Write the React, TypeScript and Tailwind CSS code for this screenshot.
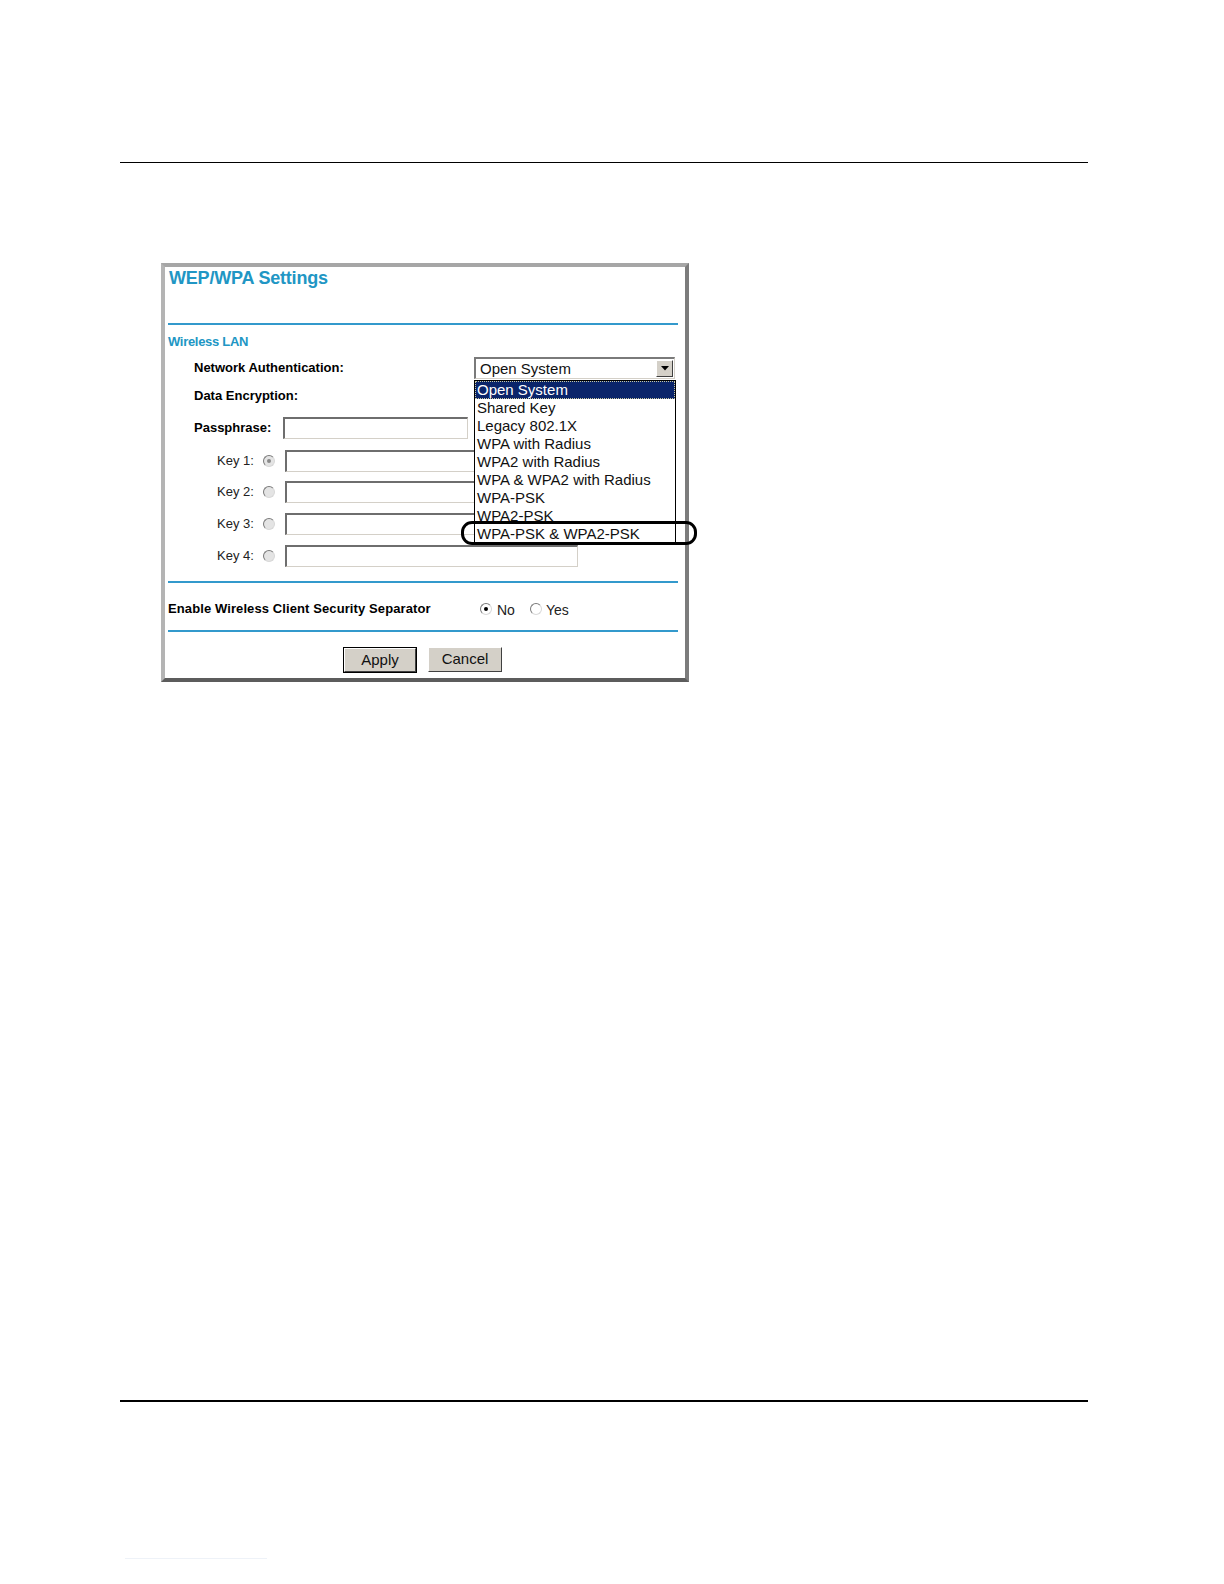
import React from "react";

const options = [
  "Open System",
  "Shared Key",
  "Legacy 802.1X",
  "WPA with Radius",
  "WPA2 with Radius",
  "WPA & WPA2 with Radius",
  "WPA-PSK",
  "WPA2-PSK",
  "WPA-PSK & WPA2-PSK",
];

function Radio({ checked, disabled }: { checked?: boolean; disabled?: boolean }) {
  return (
    <span
      className={`flex items-center justify-center w-[12px] h-[12px] rounded-full border border-t-[#7a7a7a] border-l-[#7a7a7a] border-r-[#d8d8d8] border-b-[#d8d8d8] ${
        disabled ? "bg-[#e4e4e4]" : "bg-white"
      }`}
    >
      {checked && (
        <span
          className={`w-[4px] h-[4px] rounded-full ${
            disabled ? "bg-[#8a8a8a]" : "bg-black"
          }`}
        />
      )}
    </span>
  );
}

function TextBox({ width }: { width: string }) {
  return (
    <div
      className={`${width} h-[22px] bg-white border-t-2 border-l-2 border-r border-b border-t-[#6e6e6e] border-l-[#6e6e6e] border-r-[#d4d0c8] border-b-[#d4d0c8]`}
    />
  );
}

function KeyRow({ n, mt, checked }: { n: number; mt: string; checked?: boolean }) {
  return (
    <div className={`flex items-center h-[22px] ${mt}`}>
      <span className="ml-[52px] w-[46px] text-[13px] text-[#222]">Key {n}:</span>
      <Radio disabled checked={checked} />
      <span className="ml-[10px]">
        <TextBox width="w-[293px]" />
      </span>
    </div>
  );
}

function BlueRule({ mt }: { mt: string }) {
  return <div className={`${mt} ml-[3px] w-[510px] h-[2px] bg-[#3399cc]`} />;
}

export default function App() {
  return (
    <div className="w-[1224px] h-[1584px] bg-white font-['Liberation_Sans',Arial,sans-serif] text-black">
      <div className="pl-[120px] pr-[136px] pt-[162px] flex flex-col">
        <div className="h-px bg-black" />

        {/* settings panel */}
        <div className="relative mt-[100px] ml-[41px] w-[528px] h-[419px] border-4 border-t-[#a6a6a6] border-l-[#b4b4b4] border-r-[#7c7c7c] border-b-[#5c5c5c] bg-white flex flex-col">
          <div className="pl-[4px] h-[22px] leading-[22px] text-[18px] font-bold text-[#2196c4] tracking-[-0.2px]">
            WEP/WPA Settings
          </div>

          <BlueRule mt="mt-[34px]" />

          <div className="mt-[8px] ml-[3px] h-[18px] leading-[18px] text-[13px] font-bold text-[#2196c4] tracking-[-0.3px]">
            Wireless LAN
          </div>

          {/* network authentication */}
          <div className="relative mt-[6px] flex items-center h-[22px]">
            <span className="ml-[29px] w-[280px] text-[13px] font-bold">Network Authentication:</span>
            <div className="flex items-center w-[201px] h-[22px] bg-white border-t-2 border-l-2 border-r border-b border-t-[#7a7a7a] border-l-[#7a7a7a] border-r-[#d4d0c8] border-b-[#d4d0c8]">
              <span className="ml-[4px] flex-1 text-[15px] leading-[18px] text-[#111]">Open System</span>
              <span className="mr-[1px] flex items-center justify-center w-[17px] h-[17px] bg-[#d4d0c8] border border-t-white border-l-white border-r-[#404040] border-b-[#404040]">
                <svg width="8" height="5" viewBox="0 0 8 5">
                  <path d="M0 0h8L4 4.5z" fill="#000" />
                </svg>
              </span>
            </div>

            {/* open list */}
            <div className="absolute left-[309px] top-[23px] z-10 w-[202px] h-[163px] bg-white border border-black">
              {options.map((o, i) => (
                <div
                  key={o}
                  className={`h-[18px] leading-[18px] text-[15px] pl-[2px] whitespace-nowrap ${
                    i === 0
                      ? "bg-[#0a246a] text-white outline-1 outline-dotted outline-[#c8c8a0] -outline-offset-1"
                      : "text-[#111]"
                  }`}
                >
                  {o}
                </div>
              ))}
              <div className="absolute left-[-14px] top-[140px] w-[236px] h-[24px] rounded-[11px] border-[3px] border-black" />
            </div>
          </div>

          <div className="mt-[7px] flex items-center h-[20px]">
            <span className="ml-[29px] text-[13px] font-bold">Data Encryption:</span>
          </div>

          <div className="mt-[11px] flex items-center h-[22px]">
            <span className="ml-[29px] w-[89px] text-[13px] font-bold">Passphrase:</span>
            <TextBox width="w-[185px]" />
          </div>

          <KeyRow n={1} mt="mt-[11px]" checked />
          <KeyRow n={2} mt="mt-[9px]" />
          <KeyRow n={3} mt="mt-[10px]" />
          <KeyRow n={4} mt="mt-[10px]" />

          <BlueRule mt="mt-[14px]" />

          <div className="mt-[15px] flex items-center h-[22px]">
            <span className="ml-[3px] w-[312px] text-[13px] font-bold tracking-[0.1px]">
              Enable Wireless Client Security Separator
            </span>
            <Radio checked />
            <span className="ml-[5px] w-[33px] text-[14px] text-[#222] pt-[3px]">No</span>
            <Radio />
            <span className="ml-[4px] text-[14px] text-[#222] pt-[3px]">Yes</span>
          </div>

          <BlueRule mt="mt-[10px]" />

          <div className="mt-[15px] flex h-[26px]">
            <button className="ml-[178px] w-[74px] h-[26px] bg-[#d4d0c8] border border-black text-[15px] text-[#111]">
              <span className="flex items-center justify-center w-full h-full border border-t-white border-l-white border-r-[#404040] border-b-[#404040]">
                Apply
              </span>
            </button>
            <button className="ml-[11px] w-[74px] h-[25px] bg-[#d4d0c8] border border-t-white border-l-white border-r-[#404040] border-b-[#404040] text-[15px] text-[#111]">
              Cancel
            </button>
          </div>
        </div>

        <div className="mt-[718px] h-[2px] bg-black" />
        <div className="mt-[156px] ml-[5px] w-[142px] h-px bg-[#eef2f8]" />
      </div>
    </div>
  );
}
